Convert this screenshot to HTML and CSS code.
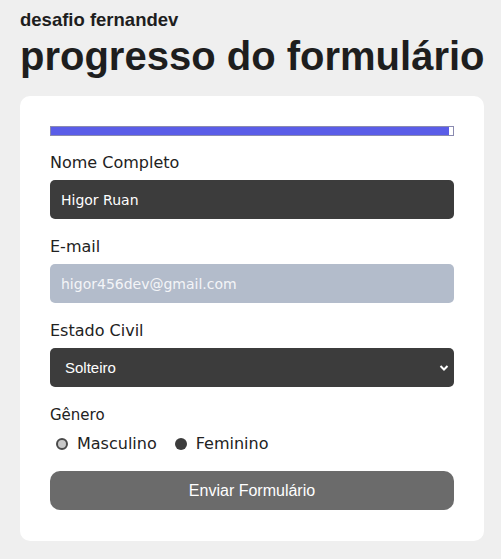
FILE: index.html
```html
<!DOCTYPE html>
<html lang="pt-BR">
<head>
<meta charset="utf-8">
<title>progresso do formulário</title>
<link rel="stylesheet" href="styles.css">
</head>
<body>
<header class="top">
  <h2 class="sub">desafio fernandev</h2>
  <h1 class="title">progresso do formulário</h1>
</header>
<main class="card">
  <div class="progress"><div class="progress-fill"></div></div>
  <div class="field">
    <label class="label">Nome Completo</label>
    <div class="input dark">Higor Ruan</div>
  </div>
  <div class="field">
    <label class="label">E-mail</label>
    <div class="input light">higor456dev@gmail.com</div>
  </div>
  <div class="field">
    <label class="label">Estado Civil</label>
    <div class="input dark select"><span>Solteiro</span>
      <svg class="chev" width="10" height="8" viewBox="0 0 10 8"><path d="M1.5 2 L5 5.5 L8.5 2" fill="none" stroke="#fff" stroke-width="2"/></svg>
    </div>
  </div>
  <div class="field">
    <label class="label small">Gênero</label>
    <div class="radios">
      <span class="radio"><span class="dot off"></span>Masculino</span>
      <span class="radio"><span class="dot on"></span>Feminino</span>
    </div>
  </div>
  <div class="button">Enviar Formulário</div>
</main>
</body>
</html>
```
FILE: styles.css
```css
html, body { margin: 0; padding: 0; }
body {
  background: #efefef;
  font-family: "Liberation Sans", Arial, sans-serif;
  color: #1e1e1e;
  padding: 10px 17px 0 20px;
}
.top { margin: 0; }
.sub {
  margin: 0;
  font-size: 18.5px;
  font-weight: bold;
  line-height: 20px;
}
.title {
  margin: 4px 0 0 0;
  font-size: 40px;
  font-weight: bold;
  line-height: 44px;
  white-space: nowrap;
}
.card {
  margin-top: 18px;
  background: #fff;
  border-radius: 10px;
  padding: 30px 30px 31px 30px;
}
.progress {
  height: 10px;
  border: 1px solid #8a8ab0;
  box-sizing: border-box;
  background: #fff;
}
.progress-fill {
  width: 99%;
  height: 100%;
  background: #5a5de8;
}
.field { margin-top: 18px; }
.field + .field { margin-top: 19px; }
.label {
  display: block;
  font-family: "DejaVu Sans", Verdana, sans-serif;
  font-size: 16px;
  line-height: 18px;
  color: #222;
  margin-bottom: 8px;
}
.label.small { font-size: 15px; margin-bottom: 10px; }
.input {
  height: 39px;
  border-radius: 5px;
  box-sizing: border-box;
  padding: 0 11px;
  display: flex;
  align-items: center;
  font-family: "DejaVu Sans", Verdana, sans-serif;
  font-size: 14px;
  color: #fff;
}
.dark { background: #3c3c3c; }
.light { background: #b3bccb; color: #f4f5f8; }
.select {
  justify-content: space-between;
  font-family: "Liberation Sans", Arial, sans-serif;
  font-size: 15px;
  padding: 0 5px 0 15px;
}
.chev { display: block; }
.radios {
  display: flex;
  gap: 18px;
  padding-left: 6px;
  font-family: "DejaVu Sans", Verdana, sans-serif;
  font-size: 16px;
  color: #222;
  line-height: 20px;
}
.radio { display: flex; align-items: center; gap: 9px; }
.dot {
  width: 12px; height: 12px; border-radius: 50%;
  box-sizing: border-box;
}
.dot.off { background: #c8c8c8; border: 2px solid #4a4a4a; }
.dot.on { background: #3c3c3c; }
.button {
  margin-top: 17px;
  height: 39px;
  border-radius: 10px;
  background: #6b6b6b;
  color: #fff;
  display: flex;
  align-items: center;
  justify-content: center;
  font-size: 16px;
}
```
